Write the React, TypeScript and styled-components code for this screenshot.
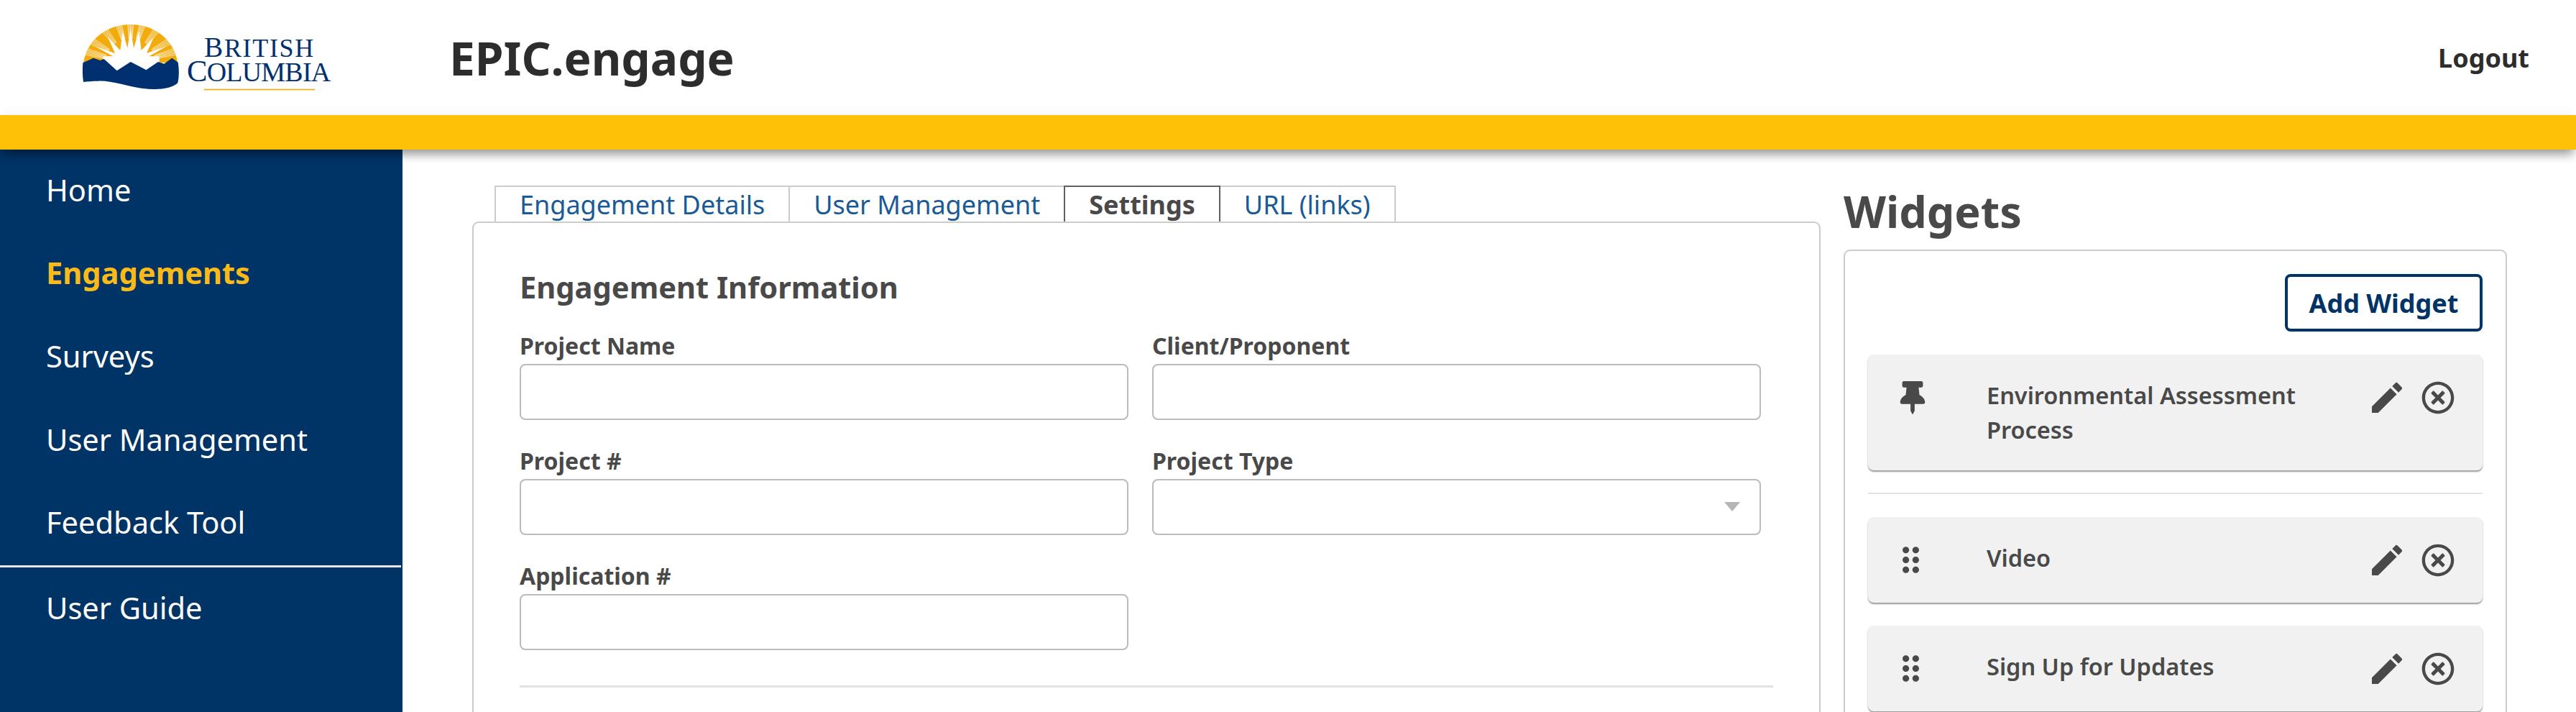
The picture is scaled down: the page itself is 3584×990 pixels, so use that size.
import React, {FC} from 'react';
import styled, {createGlobalStyle} from 'styled-components';
import {FaThumbtack, FaRegTimesCircle} from 'react-icons/fa';
import {MdDragIndicator, MdEdit} from 'react-icons/md';

const GlobalStyle = createGlobalStyle`
  html, body {
    margin: 0;
    padding: 0;
    background: #ffffff;
  }
  * {
    box-sizing: border-box;
  }
`;

const Page = styled.div`
  width: 3584px;
  height: 990px;
  overflow: hidden;
  font-family: "Noto Sans", "Open Sans", sans-serif;
  color: #494949;
  display: flex;
  flex-direction: column;
`;

const Header = styled.header`
  height: 160px;
  flex: none;
  display: flex;
  align-items: center;
  padding: 0 65px 0 80px;
`;

const LogoMark = styled.svg`
  margin-bottom: 10px;
  flex: none;
`;

const AppTitle = styled.h1`
  margin: 0 0 0 125px;
  font-size: 64px;
  font-weight: 700;
  color: #2d2d2d;
`;

const Logout = styled.span`
  margin-left: auto;
  font-size: 36px;
  font-weight: 700;
  color: #2d2d2d;
`;

const YellowBar = styled.div`
  height: 48px;
  flex: none;
  background: #ffc107;
  position: relative;
  z-index: 2;
  box-shadow: 0 10px 14px -4px rgba(0, 0, 0, 0.38), 0 4px 22px -2px rgba(0, 0, 0, 0.1);
`;

const Body = styled.div`
  flex: 1;
  display: flex;
  min-height: 0;
`;

const Sidebar = styled.nav`
  width: 560px;
  flex: none;
  background: #003366;
`;

const NavItem = styled.div<{$active?: boolean}>`
  height: 115.6px;
  display: flex;
  align-items: center;
  padding: 0 0 4px 64px;
  font-size: 41.6px;
  font-weight: ${p => (p.$active ? 700 : 400)};
  color: ${p => (p.$active ? '#fcba19' : '#ffffff')};
`;

const NavDivider = styled.div`
  height: 3px;
  margin-right: 2px;
  background: #e8e8e8;
`;

const Main = styled.main`
  flex: 1;
  display: flex;
  gap: 32px;
  padding: 50px 97px 0 97px;
  min-width: 0;
`;

const LeftColumn = styled.div`
  width: 1876px;
  flex: none;
`;

const Tabs = styled.div`
  display: flex;
  padding-left: 31px;
`;

const Tab = styled.div<{$active?: boolean}>`
  height: 50px;
  padding: 0 33px;
  margin-right: -2px;
  position: relative;
  z-index: ${p => (p.$active ? 1 : 0)};
  border: 2px solid ${p => (p.$active ? '#606060' : '#cccccc')};
  border-bottom: none;
  font-size: 36px;
  line-height: 50px;
  font-weight: ${p => (p.$active ? 700 : 400)};
  color: ${p => (p.$active ? '#494949' : '#1a5a96')};
`;

const Panel = styled.section`
  height: 800px;
  border: 2px solid #cccccc;
  border-radius: 9px;
  background: #ffffff;
  padding: 59px 64px 0 64px;
  position: relative;
  z-index: 2;
`;

const SectionTitle = styled.h2`
  margin: 0 0 26px;
  font-size: 41.6px;
  line-height: 61.7px;
  font-weight: 700;
`;

const FormGrid = styled.div`
  display: grid;
  grid-template-columns: 847px 847px;
  column-gap: 33px;
  row-gap: 33px;
`;

const Field = styled.div`
  display: flex;
  flex-direction: column;
`;

const Label = styled.label`
  font-size: 32px;
  line-height: 48px;
  font-weight: 700;
  margin-bottom: 1px;
`;

const TextInput = styled.input`
  height: 78px;
  border: 2px solid #bbbbbb;
  border-radius: 8px;
  background: #ffffff;
`;

const SelectBox = styled.div`
  height: 78px;
  border: 2px solid #bbbbbb;
  border-radius: 8px;
  display: flex;
  align-items: center;
  justify-content: flex-end;
  padding-right: 27px;
`;

const SectionDivider = styled.hr`
  height: 3px;
  margin: 49px 0 0;
  border: none;
  background: #e2e2e2;
`;

const RightColumn = styled.aside`
  width: 923px;
  flex: none;
`;

const WidgetsTitle = styled.h2`
  margin: 0 0 17px;
  font-size: 61px;
  line-height: 72px;
  font-weight: 700;
`;

const WidgetsPanel = styled.section`
  height: 800px;
  border: 2px solid #cccccc;
  border-radius: 9px;
  padding: 32px;
  display: flex;
  flex-direction: column;
`;

const AddButton = styled.button`
  align-self: flex-end;
  height: 80px;
  width: 275px;
  padding: 0;
  border: 4px solid #003366;
  border-radius: 8px;
  background: #ffffff;
  color: #003366;
  font-family: inherit;
  font-size: 36px;
  font-weight: 700;
`;

const WidgetCard = styled.div<{$top: number}>`
  margin-top: ${p => p.$top}px;
  flex: none;
  display: flex;
  align-items: flex-start;
  padding: 32px 39px 32px 0;
  min-height: 119px;
  border-radius: 8px;
  background: #f1f1f1;
  box-shadow: 0 2px 2px rgba(0, 0, 0, 0.4);
`;

const HandleSlot = styled.div<{$left: number}>`
  width: 165px;
  height: 55px;
  flex: none;
  padding-left: ${p => p.$left}px;
  display: flex;
  align-items: center;
`;

const WidgetName = styled.div`
  flex: 1;
  margin-top: 1px;
  max-width: 500px;
  font-size: 32.5px;
  line-height: 48px;
  font-weight: 600;
`;

const Actions = styled.div`
  margin-left: auto;
  height: 55px;
  display: flex;
  align-items: center;
  gap: 20px;
`;

const ListDivider = styled.hr`
  flex: none;
  height: 2px;
  margin: 31px 0 0;
  border: none;
  background: #e2e2e2;
`;

const BcLogo: FC = () => {
    const groups = [-150, -128, -107, -90, -73, -52, -30, -165, -15];
    const cx = 305;
    const cy = 235;
    const rays: React.ReactNode[] = [];
    groups.forEach(a => {
        [-4, -2, 0, 2, 4].forEach(d => {
            const t = ((a + d) * Math.PI) / 180;
            rays.push(
                <line key={`${a}${d}`}
                      x1={cx + 105 * Math.cos(t)} y1={cy + 105 * Math.sin(t)}
                      x2={cx + 210 * Math.cos(t)} y2={cy + 210 * Math.sin(t)}
                      stroke="#ffffff" strokeWidth="2.2"/>
            );
        });
    });
    return (
        <LogoMark width="420" height="130" viewBox="0 0 1260 390">
            <defs>
                <clipPath id="dome">
                    <path d="M108 232 C125 130 210 72 305 72 C400 72 485 130 502 232 Z"/>
                </clipPath>
            </defs>
            <g clipPath="url(#dome)">
                <rect x="100" y="60" width="410" height="180" fill="#f3ab0c"/>
                {rays}
                <path fill="#ffffff"
                      d="M190 205 L232 205 L160 165 L240 192 L210 125 L262 180 L272 100 L292 170 L305 90 L318 170 L340 100 L350 180 L402 125 L372 192 L452 165 L382 205 L425 205 L425 240 L190 240 Z"/>
            </g>
            <path fill="#003070"
                  d="M106 232 L150 212 L178 222 L194 216 L248 265 L305 228 L340 246 L370 262 L420 228 L445 236 L478 212 L503 230 C508 260 508 290 502 316 C470 345 410 345 350 338 C290 330 220 305 170 308 C145 308 125 310 108 312 C104 285 104 258 106 232 Z"/>
            <text x="612" y="208" fill="#003070" fontFamily='"Liberation Serif", serif' fontSize="108"
                  letterSpacing="5">
                <tspan fontSize="118">B</tspan>RITISH
            </text>
            <text x="540" y="310" fill="#003070" fontFamily='"Liberation Serif", serif' fontSize="114"
                  letterSpacing="-2.4">
                <tspan fontSize="128">C</tspan>OLUMBIA
            </text>
            <rect x="612" y="341" width="462" height="5" fill="#f3ab0c"/>
        </LogoMark>
    );
};

const WidgetRow: FC<{name: string; top: number; pinned?: boolean}> = ({name, top, pinned}) => (
    <WidgetCard $top={top}>
        <HandleSlot $left={pinned ? 39 : 32}>
            {pinned
                ? <FaThumbtack size={46} color="#494949"/>
                : <MdDragIndicator size={55} color="#494949"/>}
        </HandleSlot>
        <WidgetName>{name}</WidgetName>
        <Actions>
            <MdEdit size={56} color="#494949"/>
            <FaRegTimesCircle size={46} color="#494949"/>
        </Actions>
    </WidgetCard>
);

const App: FC = () => {
    return <>
        <GlobalStyle/>
        <Page>
            <Header>
                <BcLogo/>
                <AppTitle>EPIC.engage</AppTitle>
                <Logout>Logout</Logout>
            </Header>
            <YellowBar/>
            <Body>
                <Sidebar>
                    <NavItem>Home</NavItem>
                    <NavItem $active>Engagements</NavItem>
                    <NavItem>Surveys</NavItem>
                    <NavItem>User Management</NavItem>
                    <NavItem>Feedback Tool</NavItem>
                    <NavDivider/>
                    <NavItem>User Guide</NavItem>
                </Sidebar>
                <Main>
                    <LeftColumn>
                        <Tabs>
                            <Tab>Engagement Details</Tab>
                            <Tab>User Management</Tab>
                            <Tab $active>Settings</Tab>
                            <Tab>URL (links)</Tab>
                        </Tabs>
                        <Panel>
                            <SectionTitle>Engagement Information</SectionTitle>
                            <FormGrid>
                                <Field>
                                    <Label>Project Name</Label>
                                    <TextInput/>
                                </Field>
                                <Field>
                                    <Label>Client/Proponent</Label>
                                    <TextInput/>
                                </Field>
                                <Field>
                                    <Label>Project #</Label>
                                    <TextInput/>
                                </Field>
                                <Field>
                                    <Label>Project Type</Label>
                                    <SelectBox>
                                        <svg width="22" height="13" viewBox="0 0 22 13">
                                            <path d="M0 0 H22 L11 13 Z" fill="#b5b5b5"/>
                                        </svg>
                                    </SelectBox>
                                </Field>
                                <Field>
                                    <Label>Application #</Label>
                                    <TextInput/>
                                </Field>
                            </FormGrid>
                            <SectionDivider/>
                        </Panel>
                    </LeftColumn>
                    <RightColumn>
                        <WidgetsTitle>Widgets</WidgetsTitle>
                        <WidgetsPanel>
                            <AddButton>Add Widget</AddButton>
                            <WidgetRow name="Environmental Assessment Process" top={32} pinned/>
                            <ListDivider/>
                            <WidgetRow name="Video" top={32}/>
                            <WidgetRow name="Sign Up for Updates" top={32}/>
                        </WidgetsPanel>
                    </RightColumn>
                </Main>
            </Body>
        </Page>
    </>;
};

export default App;
